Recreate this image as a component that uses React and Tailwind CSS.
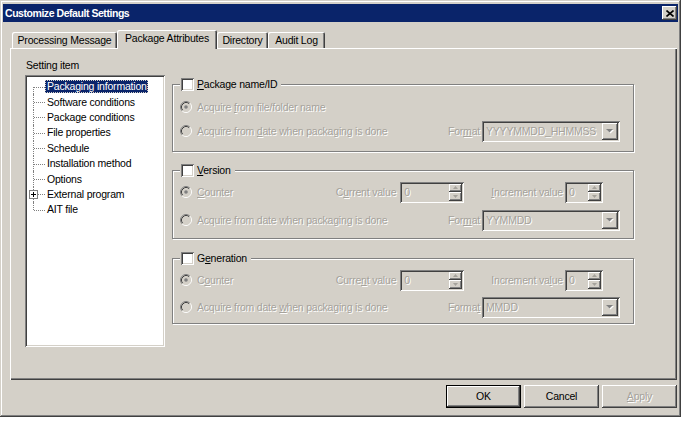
import React from "react";

const dis = "text-[#a5a29b] [text-shadow:1px_1px_0_#fff]";
const sunken =
  "shadow-[inset_1px_1px_0_#808080,inset_-1px_-1px_0_#fff,inset_2px_2px_0_#404040,inset_-2px_-2px_0_#d4d0c8]";
const raised =
  "shadow-[inset_-1px_-1px_0_#404040,inset_1px_1px_0_#fff,inset_-2px_-2px_0_#808080,inset_2px_2px_0_#d4d0c8]";

const treeItems = [
  "Packaging information",
  "Software conditions",
  "Package conditions",
  "File properties",
  "Schedule",
  "Installation method",
  "Options",
  "External program",
  "AIT file",
];

function Radio({ checked }) {
  return (
    <svg width="12" height="12" viewBox="0 0 12 12" className="shrink-0">
      <circle cx="6" cy="6" r="4.5" fill="#d4d0c8" />
      <path d="M9.89 2.11 A5.5 5.5 0 0 0 2.11 9.89" stroke="#808080" fill="none" />
      <path d="M2.11 9.89 A5.5 5.5 0 0 0 9.89 2.11" stroke="#ffffff" fill="none" />
      <path d="M9.18 2.82 A4.5 4.5 0 0 0 2.82 9.18" stroke="#404040" fill="none" />
      <path d="M2.82 9.18 A4.5 4.5 0 0 0 9.18 2.82" stroke="#d4d0c8" fill="none" />
      {checked && <circle cx="6" cy="6" r="1.8" fill="#808080" />}
    </svg>
  );
}

function RadioItem({ checked, children }) {
  return (
    <div className="flex items-center gap-[5px]">
      <Radio checked={checked} />
      <span className={dis}>{children}</span>
    </div>
  );
}

function SpinBtn({ up }) {
  return (
    <div className={`flex-1 bg-[#d4d0c8] ${raised} flex items-center justify-center`}>
      <svg width="5" height="3" viewBox="0 0 5 3">
        <path d={up ? "M2.5 0 L5 3 L0 3 Z" : "M0 0 L5 0 L2.5 3 Z"} fill="#a5a29b" />
      </svg>
    </div>
  );
}

function Spin({ className }) {
  return (
    <div className={`${className} h-[21px] bg-[#d4d0c8] ${sunken} flex p-[2px]`}>
      <span className={`flex-1 pl-[2px] leading-[16px] ${dis}`}>0</span>
      <div className="flex flex-col w-[13px]">
        <SpinBtn up />
        <SpinBtn />
      </div>
    </div>
  );
}

function Combo({ value }) {
  return (
    <div className={`w-[138px] h-[21px] bg-[#d4d0c8] ${sunken} flex p-[2px]`}>
      <span className={`flex-1 pl-[2px] leading-[17px] ${dis}`}>{value}</span>
      <div className={`w-[16px] bg-[#d4d0c8] ${raised} flex items-center justify-center`}>
        <svg width="8" height="5" viewBox="0 0 8 5">
          <path d="M1 1 L8 1 L4.5 4.5 Z" fill="#ffffff" />
          <path d="M0 0 L7 0 L3.5 3.5 Z" fill="#808080" />
        </svg>
      </div>
    </div>
  );
}

function FormatRow({ label, value, gap }) {
  return (
    <div className={`flex items-center h-[24px] pr-[13px] ${gap}`}>
      <RadioItem>{label}</RadioItem>
      <div className="ml-auto flex items-center gap-[2px]">
        <span className={dis}>{value.fmt}</span>
        <Combo value={value.text} />
      </div>
    </div>
  );
}

function CounterRow({ counter, current, increment }) {
  return (
    <div className="flex items-center h-[24px] pr-[30px]">
      <RadioItem checked>{counter}</RadioItem>
      <div className="ml-auto flex items-center">
        <span className={`${dis} mr-[4px]`}>{current}</span>
        <Spin className="w-[64px]" />
        <span className={`${dis} ml-[27px] mr-[2px]`}>{increment}</span>
        <Spin className="w-[38px]" />
      </div>
    </div>
  );
}

function Group({ label, className, children }) {
  return (
    <fieldset
      className={`border border-[#808080] shadow-[inset_1px_1px_0_#fff,1px_1px_0_#fff] ${className}`}
    >
      <legend className="ml-[7px] pl-[1px] pr-[4px] bg-[#d4d0c8] flex items-center gap-[3px] h-[14px]">
        <span className={`w-[13px] h-[13px] bg-white ${sunken}`} />
        <span>{label}</span>
      </legend>
      <div className="pl-[7px]">{children}</div>
    </fieldset>
  );
}

function Tab({ label, selected, className }) {
  return (
    <div
      className={`${className} flex items-center justify-center bg-[#d4d0c8] rounded-t-[2px] shadow-[inset_1px_1px_0_#fff,inset_-1px_0_0_#404040,inset_-2px_0_0_#808080] ${
        selected ? "h-[19px] -mb-[1px] relative z-10 pb-[2px]" : "h-[16px]"
      }`}
    >
      {label}
    </div>
  );
}

function Button({ children, isDefault, disabled }) {
  return (
    <div
      className={`w-[75px] h-[23px] bg-[#d4d0c8] flex items-center justify-center ${
        isDefault
          ? "shadow-[inset_0_0_0_1px_#000,inset_-2px_-2px_0_#404040,inset_2px_2px_0_#fff,inset_-3px_-3px_0_#808080]"
          : raised
      } ${disabled ? dis : ""}`}
    >
      {children}
    </div>
  );
}

function TreeRow({ label, index, last, selected, plus }) {
  return (
    <div className="flex items-center h-[15.4px]">
      <div className="relative w-[20px] h-full shrink-0">
        <span
          className={`absolute left-[8px] border-l border-dotted border-[#808080] ${
            index === 0 ? "top-1/2 bottom-0" : last ? "top-0 bottom-1/2" : "top-0 bottom-0"
          }`}
        />
        <span className="absolute left-[9px] right-0 top-1/2 border-t border-dotted border-[#808080]" />
        {plus && (
          <span className="absolute left-[4px] top-[3px] w-[9px] h-[9px] bg-white border border-[#808080] flex items-center justify-center">
            <svg width="5" height="5" viewBox="0 0 5 5">
              <path d="M0 2.5 H5 M2.5 0 V5" stroke="#000" strokeWidth="1" />
            </svg>
          </span>
        )}
      </div>
      <span
        className={`pl-[2px] pr-[1px] leading-[13px] whitespace-nowrap ${
          selected
            ? "bg-[#0a246a] text-white outline outline-1 outline-dotted outline-[#d4d0c8] -outline-offset-1"
            : ""
        }`}
      >
        {label}
      </span>
    </div>
  );
}

export default function App() {
  return (
    <div className="w-[685px] h-[421px] bg-white font-['Liberation_Sans',Arial,sans-serif] text-[10.5px] tracking-[-0.2px] text-black leading-[13px]">
      <div className="w-[681px] h-[417px] bg-[#d4d0c8] p-[3px] pt-[4px] flex flex-col shadow-[inset_-1px_-1px_0_#404040,inset_1px_1px_0_#d4d0c8,inset_-2px_-2px_0_#808080,inset_2px_2px_0_#fff]">
        {/* TITLE BAR */}
        <div className="h-[18px] bg-[#0a246a] flex items-center pl-[2px]">
          <span className="text-white font-bold text-[10.5px] tracking-[-0.45px]">
            Customize Default Settings
          </span>
          <div className={`ml-auto mr-[1px] w-[15px] h-[14px] bg-[#d4d0c8] ${raised} flex items-center justify-center`}>
            <svg width="8" height="7" viewBox="0 0 8 7">
              <path d="M0.5 0.5 L7.5 6.5 M7.5 0.5 L0.5 6.5" stroke="#000" strokeWidth="1.6" />
            </svg>
          </div>
        </div>

        {/* TABS */}
        <div className="flex items-end ml-[9px] mt-[8px]">
          <Tab label="Processing Message" className="w-[105px]" />
          <Tab label="Package Attributes" selected className="w-[100px]" />
          <Tab label="Directory" className="w-[51px]" />
          <Tab label="Audit Log" className="w-[57px]" />
        </div>

        {/* PANEL */}
        <div className="ml-[7px] mr-[1px] h-[332px] flex pt-[11px] pl-[15px] shadow-[inset_1px_1px_0_#fff,inset_-1px_-1px_0_#404040,inset_-2px_-2px_0_#808080]">
          <div className="w-[140px] shrink-0">
            <div className="h-[13px] pl-[1px]">Setting item</div>
            <div className={`mt-[3px] h-[272px] bg-white ${sunken} pt-[4px]`}>
              {treeItems.map((t, i) => (
                <TreeRow
                  key={t}
                  label={t}
                  index={i}
                  last={i === treeItems.length - 1}
                  selected={i === 0}
                  plus={t === "External program"}
                />
              ))}
            </div>
          </div>

          <div className="ml-[7px] w-[462px] mt-[18px]">
            <Group
              className="pb-[8px]"
              label={
                <>
                  <u>P</u>ackage name/ID
                </>
              }
            >
              <div className="pt-[4px]">
                <div className="flex items-center h-[24px]">
                  <RadioItem checked>
                    Acquire <u>f</u>rom file/folder name
                  </RadioItem>
                </div>
                <FormatRow
                  label={
                    <>
                      Acquire from <u>d</u>ate when packaging is done
                    </>
                  }
                  value={{
                    fmt: (
                      <>
                        For<u>m</u>at
                      </>
                    ),
                    text: "YYYYMMDD_HHMMSS",
                  }}
                />
              </div>
            </Group>

            <Group
              className="mt-[11px] pb-[6px]"
              label={
                <>
                  <u>V</u>ersion
                </>
              }
            >
              <div className="pt-[3px]">
                <CounterRow
                  counter={
                    <>
                      <u>C</u>ounter
                    </>
                  }
                  current={
                    <>
                      C<u>u</u>rrent value
                    </>
                  }
                  increment={
                    <>
                      <u>I</u>ncrement value
                    </>
                  }
                />
                <FormatRow
                  gap="mt-[4px]"
                  label="Acquire from date when packaging is done"
                  value={{
                    fmt: (
                      <>
                        For<u>m</u>at
                      </>
                    ),
                    text: "YYMMDD",
                  }}
                />
              </div>
            </Group>

            <Group
              className="mt-[12px] pb-[4px]"
              label={
                <>
                  G<u>e</u>neration
                </>
              }
            >
              <div className="pt-[3px]">
                <CounterRow
                  counter={
                    <>
                      C<u>o</u>unter
                    </>
                  }
                  current={
                    <>
                      Curre<u>n</u>t value
                    </>
                  }
                  increment={
                    <>
                      Increment va<u>l</u>ue
                    </>
                  }
                />
                <FormatRow
                  gap="mt-[3px]"
                  label={
                    <>
                      Acquire from date <u>w</u>hen packaging is done
                    </>
                  }
                  value={{
                    fmt: (
                      <>
                        Forma<u>t</u>
                      </>
                    ),
                    text: "MMDD",
                  }}
                />
              </div>
            </Group>
          </div>
        </div>

        {/* BUTTONS */}
        <div className="flex justify-end gap-[3px] mt-[5px] mr-[1px]">
          <Button isDefault>OK</Button>
          <Button>Cancel</Button>
          <Button disabled>
            <span>
              <u>A</u>pply
            </span>
          </Button>
        </div>
      </div>
    </div>
  );
}
